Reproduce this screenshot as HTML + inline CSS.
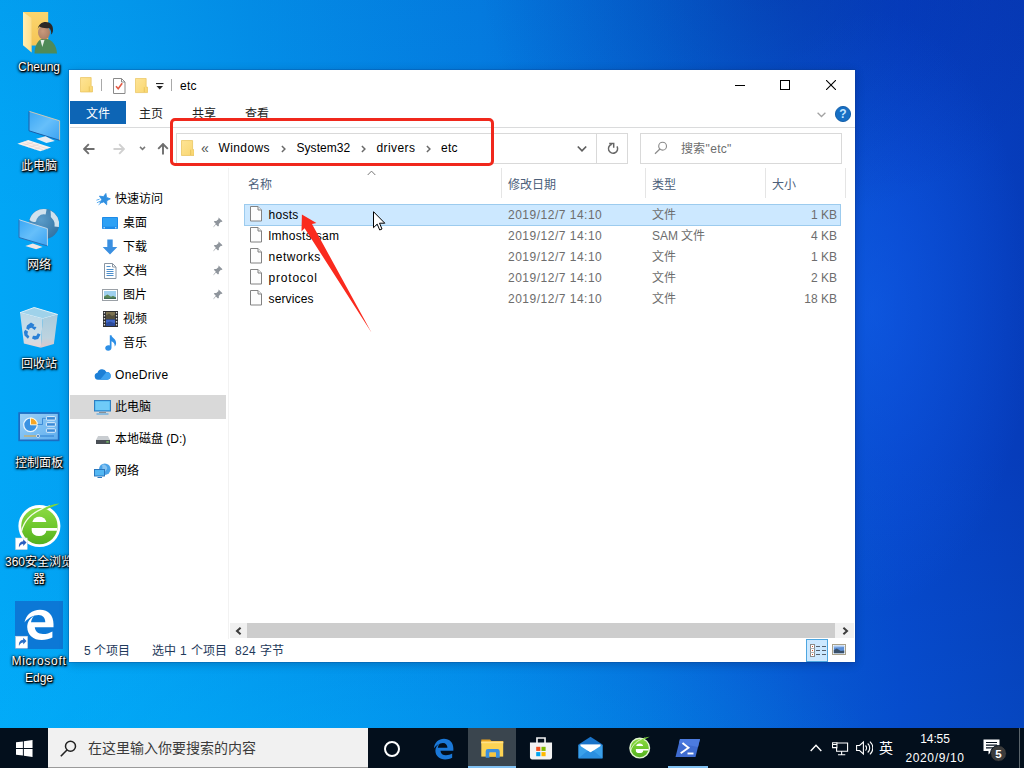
<!DOCTYPE html>
<html lang="zh-CN">
<head>
<meta charset="utf-8">
<title>etc</title>
<style>
*{box-sizing:border-box;margin:0;padding:0}
html,body{width:1024px;height:768px;overflow:hidden}
body{position:relative;font-family:"Liberation Sans",sans-serif;font-size:12px;color:#000;
background:
 radial-gradient(ellipse 620px 190px at 260px 760px, rgba(0,180,252,.42), rgba(0,180,252,0) 100%),
 radial-gradient(ellipse 300px 240px at 780px -20px, rgba(0,15,110,.24), rgba(0,15,110,0) 100%),
 linear-gradient(to bottom, rgba(0,20,120,.05) 0px, rgba(0,20,120,.02) 110px, rgba(0,20,120,0) 220px, rgba(0,190,255,0) 450px, rgba(0,190,255,.08) 728px),
 radial-gradient(ellipse 160px 300px at 872px 310px, rgba(20,100,240,.5), rgba(20,100,240,0) 100%),
 linear-gradient(to right,#02a6f6 0px,#039ef1 120px,#0392eb 250px,#047fe3 480px,#0569d9 650px,#0752cf 800px,#0644c9 900px,#063cba 1024px);}
.abs{position:absolute}
.t{position:absolute;white-space:nowrap;line-height:16px;height:16px}
/* desktop labels */
.dl{position:absolute;color:#fff;text-align:center;white-space:nowrap;line-height:16px;font-size:12px;
 text-shadow:1px 1px 2px #000,0 1px 3px rgba(0,0,0,.95),0 0 3px rgba(0,0,0,.85),1px 1px 1px rgba(0,0,0,.9),0 0 1px rgba(0,0,0,.7)}
/* window */
#win{position:absolute;left:69px;top:70px;width:786px;height:592px;background:#fff;
 box-shadow:0 0 0 1px rgba(10,60,130,.25),0 2px 9px rgba(0,0,40,.24)}

/* window parts */
#win .t{color:#000}
.tab{position:absolute;top:31px;height:23px;line-height:26px;text-align:center;font-size:12px;color:#222}
.hdr{position:absolute;top:107px;height:16px;line-height:16px;color:#4c607a;font-size:12px;white-space:nowrap}
.coldiv{position:absolute;top:98px;width:1px;height:30px;background:#e5e5e5}
.row{position:absolute;left:175px;width:597px;height:21px}
.row .n{position:absolute;left:24.500px;top:3px;line-height:16px;color:#000;white-space:nowrap}
.row .d{position:absolute;left:264px;top:3px;line-height:16px;color:#6d6d6d;white-space:nowrap;letter-spacing:.5px}
.row .k{position:absolute;left:408px;top:3px;line-height:16px;color:#6d6d6d;white-space:nowrap}
.row .z{position:absolute;right:4px;top:3px;line-height:16px;color:#6d6d6d;white-space:nowrap;text-align:right}
.row svg{position:absolute;left:6px;top:2px}
.nv{position:absolute;left:1px;width:156px;height:24px}
.nv span{position:absolute;top:4px;line-height:16px;white-space:nowrap;color:#000}
.nv svg{position:absolute}
.pin{position:absolute;left:143px}
.sb{position:absolute;top:573px;line-height:16px;color:#1e395b;white-space:nowrap}
#tb{position:absolute;left:0;top:728px;width:1024px;height:40px;background:#030f1c}
</style>
</head>
<body>

<!-- ===== DESKTOP ICONS ===== -->
<div id="desk">
 <!-- Cheung (user folder) -->
 <svg class="abs" style="left:20px;top:8px" width="42" height="50" viewBox="20 8 42 50">
  <defs><linearGradient id="uf1" x1="0" y1="0" x2="0" y2="1"><stop offset="0" stop-color="#fbd66f"/><stop offset="1" stop-color="#f5c455"/></linearGradient>
  <linearGradient id="uf2" x1="0" y1="0" x2="1" y2="0"><stop offset="0" stop-color="#ffeeb5"/><stop offset="1" stop-color="#ffe08a"/></linearGradient>
  <radialGradient id="face" cx=".4" cy=".4" r=".7"><stop offset="0" stop-color="#c99a7c"/><stop offset="1" stop-color="#a87b62"/></radialGradient></defs>
  <path d="M23 12h25.200v33.500H31.400z" fill="url(#uf1)"/>
  <path d="M23 12l8.400 6v34.300L23 45.200z" fill="url(#uf2)"/>
  <path d="M31.400 18v34.300" stroke="#f3d47e" stroke-width=".6"/>
  <path d="M34.500 53.500c0-8 3.500-13.500 7.500-14.500h5c5 1 9.500 6 10 14.500z" fill="#4f8a58"/>
  <path d="M40.500 40l1.800 7 2.200-7z" fill="#e8efe8"/>
  <ellipse cx="44" cy="32.500" rx="6" ry="7" fill="url(#face)"/>
  <path d="M37.800 29.500c.3-5 4-7.500 8-7.500 4.500 0 7.500 3 7.200 8.500-.3 2-1 3.500-1.800 4 .3-3-.7-5.500-2.200-6.500-3 .5-7.500 0-9.500-1.500-.9.600-1.400 1.700-1.700 3z" fill="#2b2826"/>
 </svg>
 <div class="dl" style="left:1px;top:59px;width:76px">Cheung</div>

 <!-- This PC -->
 <svg class="abs" style="left:16px;top:108px" width="46" height="46" viewBox="16 108 46 46">
  <defs><linearGradient id="scr" x1="0" y1="0" x2="1" y2="1"><stop offset="0" stop-color="#3aa6f4"/><stop offset=".5" stop-color="#66bffa"/><stop offset="1" stop-color="#3aa2f2"/></linearGradient></defs>
  <path d="M29 111.300l30.600 9.500v19.500L29 130.800z" fill="url(#scr)"/>
  <path d="M29 111.300l30.600 9.500v19.500" fill="none" stroke="#d9c9b0" stroke-width=".9"/>
  <path d="M29 111.300v19.500l30.600 9.500" fill="none" stroke="#1b5ea8" stroke-width="1"/>
  <path d="M36.100 138.700l9.400-2.400 9.400 4.700-8.500 1.900z" fill="#e9edf2"/>
  <path d="M17.400 143.800l10.800-3.700 22.900 7.500-10.800 3.700z" fill="#f6f2f0"/>
  <path d="M21 142.600l22.900 7.500M24.600 141.400l22.900 7.500M22.800 145.600l5.400-1.900M28.500 147.500l5.400-1.900M34.200 149.400l5.400-1.900M27.600 144.200l5.400-1.800M33.300 146l5.400-1.800" stroke="#e3c9c2" stroke-width=".5"/>
 </svg>
 <div class="dl" style="left:1px;top:158px;width:76px">此电脑</div>

 <!-- Network -->
 <svg class="abs" style="left:16px;top:206px" width="46" height="46" viewBox="16 206 46 46">
  <defs><radialGradient id="glb" cx=".4" cy=".35" r=".75"><stop offset="0" stop-color="#5b9cc9"/><stop offset="1" stop-color="#2f6f9f"/></radialGradient></defs>
  <circle cx="44" cy="224" r="15.200" fill="url(#glb)"/>
  <path d="M29.500 220.100A15 15 0 0 1 46.600 209.200L45.600 214.600Q41.500 213.600 38.500 216.500 36.500 218.500 36 221.500 33 223 29.500 220.100z" fill="#dbe9f2" opacity=".92"/><path d="M50.500 210.500A15 15 0 0 1 58.900 227L54.500 226.500Q55.200 221.500 52.500 219 50 217 50.800 214.500z" fill="#dbe9f2" opacity=".92"/>
  <path d="M19 219.700l28.400 8.900v17.300L19 237.500z" fill="url(#scr)"/>
  <path d="M19 219.700l28.400 8.900v17.300" fill="none" stroke="#cfdbe6" stroke-width=".9"/>
  <path d="M19 219.700v17.800l28.400 8.400" fill="none" stroke="#2a6fb5" stroke-width="1"/>
  <path d="M25.300 245.900l7.500-2.300 9.900 3.300-6.600 2.300z" fill="#efe6e4"/>
 </svg>
 <div class="dl" style="left:1px;top:257px;width:76px">网络</div>

 <!-- Recycle bin -->
 <svg class="abs" style="left:18px;top:305px" width="42" height="46" viewBox="18 305 42 46">
  <defs><linearGradient id="rb1" x1="0" y1="0" x2="0" y2="1"><stop offset="0" stop-color="#b9d8e8"/><stop offset=".7" stop-color="#cfdfe8"/><stop offset="1" stop-color="#e8d2d4"/></linearGradient>
  <linearGradient id="rb2" x1="0" y1="0" x2="0" y2="1"><stop offset="0" stop-color="#a8cbdd"/><stop offset=".7" stop-color="#bdd3df"/><stop offset="1" stop-color="#dcc6ca"/></linearGradient></defs>
  <path d="M20 312.700l14.200-5.200 23.500 7-15 4.200z" fill="#9fd2ea"/>
  <path d="M20 312.700l14.200-5.200 23.500 7-15 4.200z" fill="none" stroke="#e2f1f8" stroke-width="1"/>
  <path d="M20 312.700l22.700 6-1.900 29.100-16.900-4.200z" fill="url(#rb1)"/>
  <path d="M42.700 318.700l15-4.200-3.800 29.500-13.100 3.800z" fill="url(#rb2)"/>
  <g fill="#2a80d6"><path d="M27 325.500l4-3 3.500 2.300-1.200 1.700 3.200.6-1.700 2.800-1.600-1-1.500-1.200-2 .6-.8 1.800-2.700-1.700z"/><path d="M25.200 329.800l2.800 1.700-.6 2.700 2 2.200-1.500 2.400-3.400-3.200-.6-3.500z"/><path d="M32 338.500l1-2.800 3.200.2 1.600-2.600 2.700 1.300-2.300 4.300-3.400.9z"/></g>
 </svg>
 <div class="dl" style="left:1px;top:356px;width:76px">回收站</div>

 <!-- Control panel -->
 <svg class="abs" style="left:17px;top:410px" width="44" height="34" viewBox="17 410 44 34">
  <defs><linearGradient id="cp" x1="0" y1="0" x2="1" y2="1"><stop offset="0" stop-color="#9bd0f7"/><stop offset="1" stop-color="#5faeee"/></linearGradient></defs>
  <rect x="18.300" y="412.200" width="41.200" height="29" fill="#1c6dc2"/>
  <rect x="20" y="413.900" width="37.800" height="25.600" fill="url(#cp)"/>
  <circle cx="30.500" cy="424.800" r="6.800" fill="#3a92e2" stroke="#eaf5fd" stroke-width="1.200"/>
  <path d="M30.500 424.800v-6.800a6.800 6.800 0 0 1 6.800 6.800z" fill="#f6a623" stroke="#fff6d8" stroke-width="1"/>
  <path d="M37.500 424.500h5v-6.200h3.500" fill="none" stroke="#2d7fd0" stroke-width=".8"/>
  <g fill="#3b8bd8" stroke="#eef7fe" stroke-width=".9"><rect x="46.400" y="416.600" width="9" height="3.500" rx=".8"/><rect x="46.400" y="422.700" width="9" height="3.500" rx=".8"/><rect x="46.400" y="428.800" width="9" height="3.500" rx=".8"/></g>
  <path d="M24 436h13" stroke="#e9a93a" stroke-width="1"/><path d="M39 436h15" stroke="#2d7fd0" stroke-width="1"/>
  <circle cx="38" cy="436" r="1.500" fill="#2d6fb8" stroke="#eef7fe" stroke-width=".8"/>
 </svg>
 <div class="dl" style="left:1px;top:455px;width:76px">控制面板</div>

 <!-- 360 browser -->
 <svg class="abs" style="left:14px;top:500px" width="50" height="52" viewBox="14 500 50 52">
  <defs><linearGradient id="g36" x1="0" y1="0" x2="0" y2="1"><stop offset="0" stop-color="#8edb44"/><stop offset=".55" stop-color="#6cc62c"/><stop offset="1" stop-color="#52ae1e"/></linearGradient></defs>
  <circle cx="39.400" cy="526.100" r="19.600" fill="url(#g36)" stroke="#fff" stroke-width="2.800"/>
  <path d="M32.400 522A7 5.900 0 0 1 46.300 522z" fill="#fff"/>
  <path d="M31.700 527.900H57.200v2.900H46.300A7.300 5.200 0 0 1 31.700 530.800z" fill="#fff"/>
  <path d="M21.300 532C24 520 34 510.500 50 506" fill="none" stroke="#f4fbe9" stroke-width="1.300"/>
  <path d="M42 509.500C48 505.500 54 504 59.500 503.500 55.500 506 50 507.500 45 510z" fill="#7fd63c"/>
  <rect x="15.600" y="538" width="11.600" height="11.600" fill="#fff" stroke="#c9d3dd" stroke-width=".5"/>
  <path d="M19 547.500c-.5-3.500 1-6 4.200-6.300v-1.900l3.300 3.300-3.300 3.300v-2c-2 0-3.300 1.200-4.200 3.600z" fill="#2a5fc0"/>
 </svg>
 <div class="dl" style="left:1px;top:554px;width:76px">360安全浏览</div>
 <div class="dl" style="left:1px;top:571px;width:76px">器</div>

 <!-- Edge -->
 <svg class="abs" style="left:15px;top:601px" width="48" height="48" viewBox="0 0 48 48">
  <rect width="48" height="48" fill="#0c78d6"/>
  <path d="M9.500 21.500C11 13.500 17 8.700 25 8.700c8.500 0 13.500 5.800 13.500 14.300v3.300H19.800c.4 4.300 3.500 6.700 8.200 6.700 3.500 0 6.500-.9 9.400-2.600v6.200c-3 1.600-6.600 2.500-10.700 2.500-8.500 0-14.200-5-14.500-13.100.1-4.900 2.600-8.800 6.900-11-1.600 1.700-2.700 3.800-3.100 6.200h14.300c-.1-4.200-2.400-7.100-6.700-7.100-5.200 0-10.700 3-14.100 7.400z" fill="#fff"/>
  <rect x=".6" y="35.200" width="12" height="12" fill="#fff" stroke="#c9d3dd" stroke-width=".5"/>
  <path d="M4 45c-.5-3.500 1-6 4.200-6.300v-1.900l3.300 3.300-3.300 3.300v-2c-2 0-3.300 1.200-4.200 3.600z" fill="#2a6fc8"/>
 </svg>
 <div class="dl" style="left:1px;top:653px;width:76px;letter-spacing:.7px">Microsoft</div>
 <div class="dl" style="left:1px;top:670px;width:76px">Edge</div>
</div>


<!-- ===== EXPLORER WINDOW ===== -->
<div id="win">
 <!-- title bar -->
 <svg class="abs" style="left:11px;top:7px" width="13" height="16" viewBox="0 0 14 17"><defs><linearGradient id="fg" x1="0" y1="0" x2="1" y2="1"><stop offset="0" stop-color="#fee496"/><stop offset="1" stop-color="#f9d66f"/></linearGradient></defs><path d="M.5.5h11.5v9.5h1.5v6H.5z" fill="url(#fg)" stroke="#e9c45f" stroke-width=".8"/><path d="M10 10v5.5" stroke="#e3bd55" stroke-width=".8"/></svg>
 <div class="abs" style="left:32px;top:9px;width:1px;height:12px;background:#a9a9a9"></div>
 <svg class="abs" style="left:44px;top:8px" width="13" height="16" viewBox="0 0 13 16"><path d="M.5.5h8l3.5 3.5v11.5H.5z" fill="#fff" stroke="#8a8a8a"/><path d="M8.5.5v3.5h3.5" fill="none" stroke="#8a8a8a"/><path d="M3 8.2l2.2 2.6 4-5.6" fill="none" stroke="#e25a45" stroke-width="1.6"/></svg>
 <svg class="abs" style="left:66px;top:8px" width="13" height="15.500" viewBox="0 0 14 17" preserveAspectRatio="none"><path d="M.5.5h11.5v9.5h1.5v6H.5z" fill="url(#fg)" stroke="#e9c45f" stroke-width=".8"/><path d="M10 10v5.5" stroke="#e3bd55" stroke-width=".8"/></svg>
 <svg class="abs" style="left:87px;top:13px" width="8" height="8" viewBox="0 0 8 8"><path d="M0 .5h7.5" stroke="#222" stroke-width="1.2"/><path d="M.5 3h6.5l-3.25 3.6z" fill="#222"/></svg>
 <div class="abs" style="left:102px;top:9px;width:1px;height:12px;background:#a9a9a9"></div>
 <div class="t" style="left:111px;top:8px;font-size:12px;letter-spacing:.3px">etc</div>
 <svg class="abs" style="left:666px;top:15px" width="10" height="1"><rect width="10" height="1" fill="#000"/></svg>
 <svg class="abs" style="left:711px;top:10px" width="10" height="10"><rect x=".5" y=".5" width="9" height="9" fill="none" stroke="#000"/></svg>
 <svg class="abs" style="left:757px;top:10px" width="10" height="10"><path d="M0 0l10 10M10 0L0 10" stroke="#000" stroke-width="1.1"/></svg>

 <!-- ribbon tabs -->
 <div class="tab" style="left:1px;width:56px;background:#0d65b5;color:#fff">文件</div>
 <div class="tab" style="left:55.500px;width:53px">主页</div>
 <div class="tab" style="left:108.500px;width:53px">共享</div>
 <div class="tab" style="left:161.500px;width:53px">查看</div>
 <svg class="abs" style="left:748px;top:41.500px" width="9" height="6" viewBox="0 0 9 6"><path d="M.6.800l3.900 3.700 3.900-3.700" fill="none" stroke="#a3a3a3" stroke-width="1.300"/></svg>
 <svg class="abs" style="left:766px;top:36px" width="16" height="16" viewBox="0 0 16 16"><circle cx="8" cy="8" r="7.600" fill="#176fc4" stroke="#0f5aa6" stroke-width=".9"/><text x="8" y="12.200" text-anchor="middle" font-family="Liberation Sans,sans-serif" font-weight="bold" font-size="12" fill="#c4e6ff">?</text></svg>
 <div class="abs" style="left:1px;top:57px;width:785px;height:1px;background:#dadbdc"></div>

 <!-- nav buttons -->
 <svg class="abs" style="left:14px;top:73px" width="12" height="12" viewBox="0 0 12 12"><path d="M11.5 6H1.400M5.800 1.200L1 6l4.800 4.800" fill="none" stroke="#6e6e6e" stroke-width="1.900"/></svg>
 <svg class="abs" style="left:44px;top:73px" width="12" height="12" viewBox="0 0 12 12"><path d="M.5 6h10.100M6.200 1.200L11 6l-4.800 4.800" fill="none" stroke="#d0d0d0" stroke-width="1.900"/></svg>
 <svg class="abs" style="left:70px;top:76px" width="7" height="5" viewBox="0 0 7 5"><path d="M1 .9l2.500 2.500L6 .9" fill="none" stroke="#7a7a7a" stroke-width="1.500"/></svg>
 <svg class="abs" style="left:88px;top:73px" width="12" height="12" viewBox="0 0 12 12"><path d="M6 11.600V1.400M1.200 5.800L6 1l4.800 4.800" fill="none" stroke="#6e6e6e" stroke-width="1.900"/></svg>

 <!-- address box -->
 <div class="abs" style="left:107px;top:63px;width:452px;height:31px;border:1px solid #d9d9d9;background:#fff"></div>
 <div class="abs" style="left:527px;top:64px;width:1px;height:29px;background:#d9d9d9"></div>
 <svg class="abs" style="left:111.500px;top:70px" width="13.500" height="16.500" viewBox="0 0 14 17"><path d="M.5.5h11.5v9.5h1.5v6H.5z" fill="url(#fg)" stroke="#e9c45f" stroke-width=".8"/><path d="M10 10v5.5" stroke="#e3bd55" stroke-width=".8"/></svg>
 <div class="t" style="left:132px;top:69.500px;color:#555;font-size:14px">«</div>
 <div class="t" id="a1" style="left:149.500px;top:70px;letter-spacing:.4px">Windows</div>
 <svg class="abs" style="left:212px;top:74.500px" width="5" height="8" viewBox="0 0 5 8"><path d="M.9 1L3.900 4 .9 7" fill="none" stroke="#6a6a6a" stroke-width="1.500"/></svg>
 <div class="t" id="a2" style="left:227.500px;top:70px;letter-spacing:.05px">System32</div>
 <svg class="abs" style="left:292px;top:74.500px" width="5" height="8" viewBox="0 0 5 8"><path d="M.9 1L3.900 4 .9 7" fill="none" stroke="#6a6a6a" stroke-width="1.500"/></svg>
 <div class="t" id="a3" style="left:307.500px;top:70px;letter-spacing:.41px">drivers</div>
 <svg class="abs" style="left:357px;top:74.500px" width="5" height="8" viewBox="0 0 5 8"><path d="M.9 1L3.900 4 .9 7" fill="none" stroke="#6a6a6a" stroke-width="1.500"/></svg>
 <div class="t" id="a4" style="left:372px;top:70px;letter-spacing:.25px">etc</div>
 <svg class="abs" style="left:508px;top:75px" width="10" height="7" viewBox="0 0 10 7"><path d="M.800 1.500l4.200 4.300 4.200-4.300" fill="none" stroke="#5e5e5e" stroke-width="1.700"/></svg>
 <svg class="abs" style="left:538px;top:72px" width="12" height="13" viewBox="0 0 12 13"><path d="M10 4.300A4.600 4.600 0 1 1 4.800 2.200" fill="none" stroke="#666" stroke-width="1.500"/><path d="M2.200 1.400h4.500v4.300" fill="none" stroke="#666" stroke-width="1.500"/></svg>
 <!-- search box -->
 <div class="abs" style="left:571px;top:63px;width:202px;height:31px;border:1px solid #d9d9d9;background:#fff"></div>
 <svg class="abs" style="left:585px;top:71px" width="14" height="14" viewBox="0 0 14 14"><circle cx="8.6" cy="5.2" r="3.9" fill="none" stroke="#8a8a8a" stroke-width="1.1"/><path d="M5.9 8L1 12.8" stroke="#8a8a8a" stroke-width="1.2"/></svg>
 <div class="t" style="left:612px;top:71px;color:#6d6d6d;letter-spacing:.3px">搜索"etc"</div>
 <!-- column headers -->
 <div class="hdr" style="left:179px">名称</div>
 <svg class="abs" style="left:298px;top:100px" width="9" height="6" viewBox="0 0 9 6"><path d="M.7 5l3.8-3.9L8.3 5" fill="none" stroke="#777" stroke-width="1"/></svg>
 <div class="coldiv" style="left:432px"></div><div class="hdr" style="left:439px">修改日期</div>
 <div class="coldiv" style="left:576px"></div><div class="hdr" style="left:583px">类型</div>
 <div class="coldiv" style="left:696px"></div><div class="hdr" style="left:703px">大小</div>
 <div class="coldiv" style="left:776px"></div>

 <!-- file rows -->
 <div class="row" style="top:134px;height:22px;background:#cce8ff;box-shadow:inset 0 0 0 1px #9ccbee"><svg width="12" height="16" viewBox="0 0 12 16"><path d="M.5.5h7.500l3.500 3.500v11H.5z" fill="#fdfdfd" stroke="#828282"/><path d="M8 .5v3.500h3.500" fill="#eef0f0" stroke="#828282"/></svg><span class="n" style="letter-spacing:.27px">hosts</span><span class="d">2019/12/7 14:10</span><span class="k">文件</span><span class="z">1 KB</span></div>
 <div class="row" style="top:155px"><svg width="12" height="16" viewBox="0 0 12 16"><path d="M.5.5h7.500l3.500 3.500v11H.5z" fill="#fdfdfd" stroke="#828282"/><path d="M8 .5v3.500h3.500" fill="#eef0f0" stroke="#828282"/></svg><span class="n" style="letter-spacing:.31px">lmhosts.sam</span><span class="d">2019/12/7 14:10</span><span class="k">SAM 文件</span><span class="z">4 KB</span></div>
 <div class="row" style="top:176px"><svg width="12" height="16" viewBox="0 0 12 16"><path d="M.5.5h7.500l3.500 3.500v11H.5z" fill="#fdfdfd" stroke="#828282"/><path d="M8 .5v3.500h3.500" fill="#eef0f0" stroke="#828282"/></svg><span class="n" style="letter-spacing:.52px">networks</span><span class="d">2019/12/7 14:10</span><span class="k">文件</span><span class="z">1 KB</span></div>
 <div class="row" style="top:197px"><svg width="12" height="16" viewBox="0 0 12 16"><path d="M.5.5h7.500l3.500 3.500v11H.5z" fill="#fdfdfd" stroke="#828282"/><path d="M8 .5v3.500h3.500" fill="#eef0f0" stroke="#828282"/></svg><span class="n" style="letter-spacing:.8px">protocol</span><span class="d">2019/12/7 14:10</span><span class="k">文件</span><span class="z">2 KB</span></div>
 <div class="row" style="top:218px"><svg width="12" height="16" viewBox="0 0 12 16"><path d="M.5.5h7.500l3.500 3.500v11H.5z" fill="#fdfdfd" stroke="#828282"/><path d="M8 .5v3.500h3.500" fill="#eef0f0" stroke="#828282"/></svg><span class="n" style="letter-spacing:.14px">services</span><span class="d">2019/12/7 14:10</span><span class="k">文件</span><span class="z">18 KB</span></div>

 <!-- nav pane -->
 <div class="abs" style="left:159px;top:98px;width:1px;height:471px;background:#f2f2f2"></div>
 <div class="nv" style="top:117px"><svg style="left:26px;top:5px" width="15" height="14" viewBox="0 0 15 14"><path d="M8.500 1.300l1.600 3.700 4 .4-3 2.700.9 4-3.500-2.100-3.500 2.100.9-4-3-2.700 4-.4z" fill="#2f8fe0" stroke="#2f8fe0" stroke-width=".8" stroke-linejoin="round" transform="rotate(14 8.500 7)"/><path d="M.4 8.200l3.200-1M.9 10.800l3.200-1.600M2.600 12.800l2.400-1.800" stroke="#5fb0f0" stroke-width="1"/></svg><span style="left:45px">快速访问</span></div>
 <div class="nv" style="top:141px"><svg style="left:32px;top:6px" width="16" height="13" viewBox="0 0 16 13"><rect width="16" height="12" rx=".8" fill="#1e8be8"/><rect x="1" y="1" width="14" height="8.600" fill="#2ea1f5"/><rect x="1.500" y="10.400" width="1.400" height=".9" fill="#fff"/><rect x="13" y="10.400" width="1.400" height=".9" fill="#fff"/></svg><span style="left:53px">桌面</span><svg class="pin" style="top:6px" width="10" height="11" viewBox="0 0 10 11"><path d="M5.600.4l3.900 3.900-.9.700-.700-.2-2.100 2.300.1 1.700-.9.800-2.100-2.200-2.500 3.100.200-.9 2.200-2.800-2-2 .8-.9 1.700.1 2.300-2.100-.2-.7z" fill="#8f959c"/></svg></div>
 <div class="nv" style="top:165px"><svg style="left:32px;top:4px" width="16" height="16" viewBox="0 0 16 16"><path d="M5.300.5h5.400v7.600h4.600L8 15.500.7 8.100h4.600z" fill="#3a8fe0"/></svg><span style="left:53px">下载</span><svg class="pin" style="top:6px" width="10" height="11" viewBox="0 0 10 11"><path d="M5.600.4l3.900 3.900-.9.700-.700-.2-2.100 2.300.1 1.700-.9.800-2.100-2.200-2.500 3.100.200-.9 2.200-2.800-2-2 .8-.9 1.700.1 2.300-2.100-.2-.7z" fill="#8f959c"/></svg></div>
 <div class="nv" style="top:189px"><svg style="left:34px;top:4px" width="13" height="16" viewBox="0 0 13 16"><path d="M.5.5h8l3.500 3.500v11.500H.5z" fill="#fff" stroke="#8a96a3"/><path d="M8.500.5v3.500H12" fill="none" stroke="#8a96a3"/><path d="M2.500 6.500h7M2.500 8.500h7M2.500 10.500h7M2.500 12.500h7" stroke="#4d8fcc" stroke-width="1"/><path d="M2.500 3.500h4" stroke="#4d8fcc"/></svg><span style="left:53px">文档</span><svg class="pin" style="top:6px" width="10" height="11" viewBox="0 0 10 11"><path d="M5.600.4l3.900 3.900-.9.700-.700-.2-2.100 2.300.1 1.700-.9.800-2.100-2.200-2.500 3.100.200-.9 2.200-2.800-2-2 .8-.9 1.700.1 2.300-2.100-.2-.7z" fill="#8f959c"/></svg></div>
 <div class="nv" style="top:213px"><svg style="left:32px;top:6px" width="16" height="12" viewBox="0 0 16 12"><rect x=".5" y=".5" width="15" height="11" fill="#fff" stroke="#9aa0a6"/><rect x="2" y="2" width="12" height="8" fill="#9fd0ee"/><path d="M2 10V7.500l3.500-2 3.500 2.300 2-1 3 1.700V10z" fill="#5d8a5a"/><path d="M2 10V8.600l5 .5 7-.6V10z" fill="#3f6b56"/></svg><span style="left:53px">图片</span><svg class="pin" style="top:6px" width="10" height="11" viewBox="0 0 10 11"><path d="M5.600.4l3.900 3.900-.9.700-.700-.2-2.100 2.300.1 1.700-.9.800-2.100-2.200-2.500 3.100.200-.9 2.200-2.800-2-2 .8-.9 1.700.1 2.300-2.100-.2-.7z" fill="#8f959c"/></svg></div>
 <div class="nv" style="top:237px"><svg style="left:33px;top:4px" width="15" height="16" viewBox="0 0 15 16"><rect width="15" height="16" fill="#2e2e30"/><rect x="3" y="1" width="9" height="6.500" fill="#7d7250"/><path d="M3 4.500l3-2 3 2.500 3-1.500v4H3z" fill="#544f3c"/><rect x="3" y="8.500" width="9" height="6.500" fill="#3f66c8"/><path d="M3 12l4-1.500 5 2V15H3z" fill="#2b4a9a"/><g fill="#dcdcdc"><rect x=".8" y="1" width="1.300" height="1.500"/><rect x=".8" y="4" width="1.300" height="1.500"/><rect x=".8" y="7" width="1.300" height="1.500"/><rect x=".8" y="10" width="1.300" height="1.500"/><rect x=".8" y="13" width="1.300" height="1.500"/><rect x="12.900" y="1" width="1.300" height="1.500"/><rect x="12.900" y="4" width="1.300" height="1.500"/><rect x="12.900" y="7" width="1.300" height="1.500"/><rect x="12.900" y="10" width="1.300" height="1.500"/><rect x="12.900" y="13" width="1.300" height="1.500"/></g></svg><span style="left:53px">视频</span></div>
 <div class="nv" style="top:261px"><svg style="left:35px;top:4px" width="12" height="16" viewBox="0 0 12 16"><path d="M4.800.3h1.700c.3 2.600 4.600 3.600 4.600 7.600 0 1.500-.6 2.700-1.400 3.600.3-2.800-1.300-4.600-3.200-5.200v6.400c0 1.700-1.500 3-3.300 3S.2 14.500.2 13s1.500-2.700 3.200-2.700c.5 0 1 .1 1.400.3z" fill="#2d8fe6"/></svg><span style="left:53px">音乐</span></div>
 <div class="nv" style="top:293px"><svg style="left:24px;top:6px" width="17" height="11" viewBox="0 0 17 11"><path d="M4 10.800a3.600 3.600 0 0 1-.5-7.100A4.800 4.800 0 0 1 12.400 3a3.900 3.900 0 0 1 .700 7.800z" fill="#1c7fd6"/><path d="M6 10.800l6.500-7.800a3.900 3.900 0 0 1 .6 7.800z" fill="#3ea2f0"/></svg><span style="left:45px;letter-spacing:.35px">OneDrive</span></div>
 <div class="nv" style="top:325px;background:#d9d9d9"><svg style="left:24px;top:5px" width="17" height="15" viewBox="0 0 17 15"><rect x=".5" y=".5" width="16" height="10.500" fill="#49b4f1" stroke="#2f7fc1"/><rect x="1.500" y="1.500" width="14" height="8.500" fill="#6fcbf8"/><rect x="5" y="12" width="7" height="1" fill="#8a8f94"/><rect x="2.500" y="13.500" width="12" height="1" fill="#3f9be0"/></svg><span style="left:45px">此电脑</span></div>
 <div class="nv" style="top:357px"><svg style="left:25.500px;top:9px" width="14" height="8" viewBox="0 0 17 8" preserveAspectRatio="none"><path d="M2.500 0h12L17 4H0z" fill="#c9cdd1"/><rect x="0" y="4" width="17" height="4" fill="#4a4f55"/><rect x="12.500" y="5.300" width="3" height="1.200" fill="#7fd36b"/></svg><span style="left:45px">本地磁盘 (D:)</span></div>
 <div class="nv" style="top:389px"><svg style="left:24px;top:4px" width="17" height="16" viewBox="0 0 17 16"><circle cx="10.800" cy="6.200" r="5.800" fill="#4aa3e8"/><path d="M8 2c2-1 4 0 5 2s-1 3-2 5-3 1-3-1 1-3 0-6z" fill="#9fd0f4" opacity=".7"/><rect x=".5" y="6.500" width="10" height="6.500" fill="#53b7f3" stroke="#2a77bd"/><rect x="3.500" y="14" width="4.500" height="1" fill="#2a77bd"/></svg><span style="left:45px">网络</span></div>

 <!-- horizontal scrollbar -->
 <div class="abs" style="left:161px;top:553px;width:624px;height:15px;background:#f0f0f0"></div>
 <div class="abs" style="left:178px;top:553px;width:588px;height:15px;background:#cdcdcd"></div>
 <svg class="abs" style="left:165.500px;top:556.500px" width="7" height="8" viewBox="0 0 7 8"><path d="M5.600 .8L2 4l3.600 3.200" fill="none" stroke="#3c3c3c" stroke-width="2"/></svg>
 <svg class="abs" style="left:773px;top:556.500px" width="7" height="8" viewBox="0 0 7 8"><path d="M1.400 .8L5 4 1.400 7.200" fill="none" stroke="#3c3c3c" stroke-width="2"/></svg>

 <!-- status bar -->
 <div class="sb" style="left:15px">5 个项目</div>
 <div class="sb" style="left:83px;letter-spacing:.25px">选中 1 个项目</div>
 <div class="sb" style="left:166px;letter-spacing:.3px">824 字节</div>
 <div class="abs" style="left:737px;top:569px;width:22px;height:23px;background:#cce8ff;border:1px solid #4ea6e0"></div>
 <svg class="abs" style="left:741px;top:574px" width="17" height="13" viewBox="0 0 17 13"><rect x=".5" y=".5" width="4" height="12" fill="#fff" stroke="#8a8a8a"/><path d="M.5 4.500h4M.5 8.500h4" stroke="#b5b5b5"/><g fill="#d4552c"><rect x="2" y="2" width="1" height="1"/><rect x="2" y="6" width="1" height="1"/><rect x="2" y="10" width="1" height="1"/></g><path d="M6 2.500h4M12 2.500h4M6 6.500h4M12 6.500h4M6 10.500h4M12 10.500h4" stroke="#56606c" stroke-width="1"/></svg>
 <svg class="abs" style="left:763px;top:574px" width="14" height="11" viewBox="0 0 14 11"><rect x=".5" y=".5" width="13" height="10" fill="#fff" stroke="#a8a08a"/><rect x="1.800" y="1.800" width="10.400" height="7.400" fill="#5c8fd6"/><path d="M1.800 9.200V6l3-1.500 4 2.500 3.400-.5v2.700z" fill="#39506a"/><path d="M1.800 3.500l10.400-.5V1.800H1.800z" fill="#a7c6ee"/></svg>
</div>



<!-- ===== ANNOTATIONS ===== -->
<div class="abs" style="left:170px;top:118px;width:324px;height:48px;border:3.5px solid #f0281c;border-radius:5px"></div>
<svg class="abs" style="left:290px;top:205px" width="100" height="135" viewBox="290 205 100 135"><path d="M301.900 214.400L316.400 223 312 224 371.600 332.700 304.600 228.200 301.500 231.500z" fill="#fa2a1e"/></svg>
<svg class="abs" style="left:373px;top:211px" width="13" height="20" viewBox="0 0 13 20"><path d="M.5.700v16l3.700-3.600 2.500 5.900 2.300-1-2.500-5.800H11.800z" fill="#fff" stroke="#000" stroke-width="1" stroke-linejoin="miter"/></svg>

<!-- ===== TASKBAR ===== -->
<div id="tb">
 <!-- start -->
 <svg class="abs" style="left:15.500px;top:11.500px" width="17" height="17" viewBox="0 0 18 18"><path d="M0 2.500L7.300 1.500v7H0zM8.300 1.350L17.500 0v8.500H8.300zM0 9.500h7.300v7L0 15.500zM8.300 9.500h9.200V18l-9.200-1.350z" fill="#fff"/></svg>
 <!-- search -->
 <div class="abs" style="left:48px;top:0;width:320px;height:40px;background:#f1f1f1;border-bottom:1px solid #9a9a9a"></div>
 <svg class="abs" style="left:60px;top:12px" width="17" height="17" viewBox="0 0 17 17"><circle cx="10.500" cy="6.300" r="5" fill="none" stroke="#222" stroke-width="1.500"/><path d="M7 10L.8 16.200" stroke="#222" stroke-width="1.600"/></svg>
 <div class="t" style="left:88px;top:11px;font-size:14px;line-height:18px;height:18px;color:#3b3b3b">在这里输入你要搜索的内容</div>
 <!-- cortana -->
 <svg class="abs" style="left:383px;top:12px" width="18" height="18" viewBox="0 0 18 18"><circle cx="9" cy="9" r="7" fill="none" stroke="#fff" stroke-width="2"/></svg>
 <!-- edge -->
 <svg class="abs" style="left:432.500px;top:9.500px" width="21" height="22" viewBox="0 0 23 24"><path d="M1 11.200C1.600 5 6.200.8 12 .8c6.200 0 10.300 4.300 10.300 10.700v2.300H8.200c.2 3.200 2.700 5 6 5 2.500 0 4.800-.7 6.800-1.900v4.700c-2.200 1.200-4.800 1.800-7.700 1.800-6.300 0-10.400-3.600-10.700-9.500 0-3.500 2-6.300 5-7.900-1.300 1.300-2 3-2.300 4.600h10.500c0-3-1.700-5.300-5-5.300-3.600 0-7.600 2.300-9.800 5.900z" fill="#1a78d8"/></svg>
 <!-- explorer (active) -->
 <div class="abs" style="left:468px;top:0;width:48px;height:40px;background:#3a454e"></div>
 <div class="abs" style="left:468px;top:38px;width:48px;height:2px;background:#80c0f2"></div>
 <svg class="abs" style="left:480.500px;top:10.500px" width="23" height="19" viewBox="0 0 23 19"><path d="M.3.400h8.700l1.500 1.600h11.700v2.500H.3z" fill="#e9a21f"/><rect x=".3" y="2.600" width="21.900" height="15" fill="#fcd353"/><rect x=".3" y="2.600" width="21.900" height="1.600" fill="#ffe186"/><path d="M4.700 18.700V12.200a2.300 2.300 0 0 1 2.300-2.300h9.400a2.300 2.300 0 0 1 2.300 2.300v6.500h-3.800v-5.100H8.500v5.100z" fill="#3a8fde"/><rect x="8.500" y="13.600" width="6.400" height="4" fill="#f7c63e"/></svg>
 <!-- store -->
 <svg class="abs" style="left:528.500px;top:8px" width="24" height="24.500" viewBox="0 0 25 25"><path d="M8.300 7V1.800h8.400V7" fill="none" stroke="#f2f2f2" stroke-width="1.700"/><path d="M1 6.500h23V22c0 1.200-.9 2.300-2.200 2.300H3.200C2 24.300 1 23.300 1 22z" fill="#f3f3f3"/><rect x="7.500" y="11" width="4.300" height="4.300" fill="#f25022"/><rect x="13" y="11" width="4.300" height="4.300" fill="#7fba00"/><rect x="7.500" y="16.500" width="4.300" height="4.300" fill="#00a4ef"/><rect x="13" y="16.500" width="4.300" height="4.300" fill="#ffb900"/></svg>
 <!-- mail -->
 <svg class="abs" style="left:577.500px;top:8px" width="25" height="23.500" viewBox="0 0 26 24"><path d="M13 .5L25.500 8.500V23H.5V8.500z" fill="#1a73c8"/><path d="M2.500 8.500h21V20h-21z" fill="#fff"/><path d="M.5 8.800L13 17l12.500-8.200V23H.5z" fill="#3aa0ea"/><path d="M.5 23l9.500-8 3 2 3-2 9.500 8z" fill="#2b8fe0"/></svg>
 <!-- 360 -->
 <svg class="abs" style="left:626.500px;top:7px" width="25" height="26" viewBox="14 500 50 52"><circle cx="39.400" cy="526.100" r="19.600" fill="url(#g36)" stroke="#e4f6d4" stroke-width="2.800"/><path d="M32.400 522A7 5.900 0 0 1 46.300 522z" fill="#fff"/><path d="M31.700 527.900H57.200v2.900H46.300A7.300 5.200 0 0 1 31.700 530.800z" fill="#fff"/><path d="M21.300 532C24 520 34 510.500 50 506" fill="none" stroke="#f4fbe9" stroke-width="1.600"/><path d="M42 509.500C48 505.500 54 504 59.500 503.500 55.500 506 50 507.500 45 510z" fill="#7fd63c"/></svg>
 <!-- powershell -->
 <div class="abs" style="left:668px;top:38px;width:40px;height:2px;background:#80c0f2"></div>
 <svg class="abs" style="left:675px;top:10px" width="26" height="20" viewBox="0 0 26 20"><path d="M5 1h20l-4.500 18H.5z" fill="#3f6cd0"/><path d="M5 1h20l-2 8C16 8 9 6 4 5z" fill="#4c7be0"/><path d="M7.500 5l6 4.800-7.800 5.500" fill="none" stroke="#fff" stroke-width="1.900"/><path d="M12.500 15.500h6" stroke="#fff" stroke-width="1.900"/></svg>
 <!-- tray -->
 <svg class="abs" style="left:810px;top:16px" width="12" height="8" viewBox="0 0 12 8"><path d="M.7 7L6 1.200 11.300 7" fill="none" stroke="#fff" stroke-width="1.400"/></svg>
 <svg class="abs" style="left:832px;top:13.500px" width="16.500" height="14" viewBox="0 0 18 15"><path d="M5 1h12v9H5V6" fill="none" stroke="#fff" stroke-width="1.200"/><path d="M.6.600h4.800v5.400H.6zM.6 2.500h4.800" fill="none" stroke="#fff" stroke-width="1.100"/><path d="M10.500 10v3.500M6.500 13.800h8" stroke="#fff" stroke-width="1.200"/></svg>
 <svg class="abs" style="left:856px;top:12px" width="17" height="16" viewBox="0 0 17 16"><path d="M.6 5.500h3L7.400 2v12L3.600 10.500h-3z" fill="none" stroke="#fff" stroke-width="1.100"/><path d="M9.500 5.500a3.500 3.500 0 0 1 0 5M11.700 3.500a6 6 0 0 1 0 9M13.900 1.600a8.500 8.500 0 0 1 0 12.800" fill="none" stroke="#fff" stroke-width="1.100"/></svg>
 <div class="t" style="left:879px;top:11px;font-size:14px;line-height:18px;height:18px;color:#fff">英</div>
 <div class="t" id="clk" style="left:905px;top:3px;width:60px;text-align:center;color:#fff;font-size:12px;letter-spacing:-.1px">14:55</div>
 <div class="t" id="dat" style="left:905px;top:22px;width:60px;text-align:center;color:#fff;font-size:12px;letter-spacing:.65px">2020/9/10</div>
 <svg class="abs" style="left:983px;top:11px" width="17" height="16" viewBox="0 0 17 16"><path d="M.500.5h16v11.500H9l-3.500 3.500V12H.5z" fill="#fff"/><path d="M3 3.500h11M3 6.200h11M3 8.900h7" stroke="#030f1c" stroke-width="1.200"/></svg>
 <svg class="abs" style="left:990px;top:17px" width="17" height="17" viewBox="0 0 17 17"><circle cx="8.500" cy="8.500" r="8" fill="#3c3c3c" stroke="#030f1c" stroke-width="1"/><text x="8.500" y="12.600" text-anchor="middle" font-family="Liberation Sans,sans-serif" font-weight="bold" font-size="11.500" fill="#fff">5</text></svg>
 <div class="abs" style="left:1019px;top:0;width:1px;height:40px;background:#5a646b"></div>
</div>


</body>
</html>
